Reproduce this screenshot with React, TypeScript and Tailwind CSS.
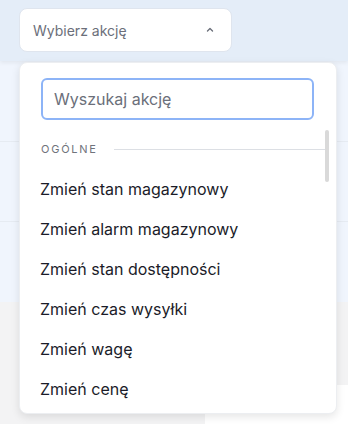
import React, { useState } from 'react'

const actions = [
  'Zmień stan magazynowy',
  'Zmień alarm magazynowy',
  'Zmień stan dostępności',
  'Zmień czas wysyłki',
  'Zmień wagę',
  'Zmień cenę',
]

export default function App() {
  const [search, setSearch] = useState('')

  const filtered = actions.filter((a) => a.toLowerCase().includes(search.toLowerCase()))

  return (
    <div className="relative w-[348px] h-[424px] overflow-hidden bg-[#f3f3f4] font-['Inter',sans-serif]">
      {/* Header */}
      <div className="relative z-10 h-[61px] bg-[#e4edf8] shadow-[0_2px_4px_rgba(0,0,0,0.06)] px-[19px] pt-[8px]">
        <button className="w-[213px] h-[44px] bg-white rounded-lg border border-[#dfe5ee] flex items-center justify-between pl-[13px] pr-[16px] text-[14px] text-[#6b6f7a]">
          <span>Wybierz akcję</span>
          <svg className="w-[10px] h-[10px] text-[#6b6f7a]" fill="none" viewBox="0 0 10 10" stroke="currentColor">
            <path strokeLinecap="round" strokeLinejoin="round" strokeWidth={1.4} d="M2.5 6l2.5-2.5L7.5 6" />
          </svg>
        </button>
      </div>

      {/* Background rows */}
      <div className="flex flex-col">
        <div className="h-[81px] bg-[#f0f5fd] border-b border-[#e6ebf2]" />
        <div className="h-[80px] bg-[#f0f5fd] border-b border-[#e6ebf2]" />
        <div className="h-[80px] bg-[#f0f5fd]" />
        <div className="h-[83px] bg-[#f3f3f4]" />
        <div className="flex h-[40px]">
          <div className="w-[205px] bg-[#f3f3f4]" />
          <div className="flex-1 bg-white" />
        </div>
      </div>

      {/* Dropdown */}
      <div className="absolute z-20 left-[19px] top-[62px] w-[318px] h-[352px] bg-white rounded-lg border border-[#eceef1] shadow-[0_3px_8px_rgba(0,0,0,0.10)] flex flex-col overflow-hidden">
        <div className="pt-[15px] pl-[21px] pr-[22px]">
          <input
            type="text"
            placeholder="Wyszukaj akcję"
            value={search}
            onChange={(e) => setSearch(e.target.value)}
            className="w-[273px] h-[42px] rounded-md border-2 border-[#8db4f7] px-[11px] text-[16px] text-[#1d1e2b] placeholder-[#6b6f7a] outline-none"
          />
        </div>

        <div className="relative flex-1 overflow-hidden mt-[10px]">
          <div className="h-[39px] flex items-center pl-[21px] pr-[10px] gap-[16px]">
            <span className="text-[11px] tracking-[0.16em] text-[#70737c]">OGÓLNE</span>
            <div className="flex-1 h-px bg-[#dcdfe4]" />
          </div>
          {filtered.map((a) => (
            <div key={a} className="h-[40px] flex items-center pl-[20px] text-[16px] text-[#1b1c29] cursor-pointer hover:bg-gray-50">
              {a}
            </div>
          ))}

          {/* Scrollbar thumb */}
          <div className="absolute right-[7px] top-0 w-[4px] h-[52px] rounded-full bg-[#d9d9d9]" />
        </div>
      </div>
    </div>
  )
}
